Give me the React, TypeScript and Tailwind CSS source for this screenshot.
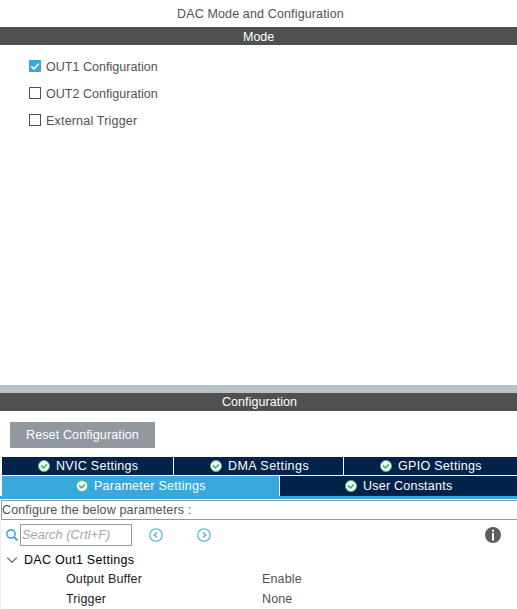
import React from "react";

function Check() {
  return (
    <svg className="h-3 w-3 shrink-0" viewBox="0 0 12 12">
      <circle cx="6" cy="6" r="5.5" fill="#fff" stroke="#55b878" strokeWidth="1" />
      <path d="M3 5.4 5.5 7.9 9 4.4" fill="none" stroke="#45b26c" strokeWidth="1.5" />
    </svg>
  );
}

function Option({ label, tracking, checked = false }: { label: string; tracking: string; checked?: boolean }) {
  return (
    <div className="flex h-[27px] items-center gap-[5px]">
      {checked ? (
        <svg className="h-3 w-3 bg-[#39a9dc]" viewBox="0 0 12 12">
          <path d="M2.2 6.2 4.8 8.8 9.9 3.7" fill="none" stroke="#fff" strokeWidth="1.6" />
        </svg>
      ) : (
        <span className="h-3 w-3 border border-[#4f5150] bg-white" />
      )}
      <span className={`pt-[2px] ${tracking}`}>{label}</span>
    </div>
  );
}

function Tab({ label, className }: { label: string; className: string }) {
  return (
    <div className={`flex items-center gap-1.5 text-white ${className}`}>
      <Check />
      <span>{label}</span>
    </div>
  );
}

function Arrow({ right = false }: { right?: boolean }) {
  return (
    <svg className="h-3.5 w-3.5" viewBox="0 0 14 14" fill="none" stroke="#39a9dc">
      <circle cx="7" cy="7" r="6.2" strokeWidth="1.1" />
      <path d={right ? "M6 4.3 8.7 7 6 9.7" : "M8 4.3 5.3 7 8 9.7"} strokeWidth="1.2" />
    </svg>
  );
}

export default function App() {
  return (
    <div className="h-[609px] w-[517px] overflow-hidden whitespace-nowrap bg-white font-['Liberation_Sans',Arial,sans-serif] text-[12.5px] leading-[18px] tracking-[0.14px] text-[#505251]">
      <div className="h-[27px] pl-[177px] pt-[5px]">DAC Mode and Configuration</div>
      <div className="h-[18px] bg-[#4f5150] pl-[243px] pt-px leading-[18px] tracking-normal text-white">Mode</div>
      <div className="h-[340px] pl-[29px] pt-[7px]">
        <Option label="OUT1 Configuration" tracking="tracking-[0.03px]" checked />
        <Option label="OUT2 Configuration" tracking="tracking-[0.03px]" />
        <Option label="External Trigger" tracking="tracking-[0.19px]" />
      </div>
      <div className="h-2 bg-[#b7c3c9]" />
      <div className="h-[18px] bg-[#4f5150] pl-[222px] tracking-[0.06px] text-white">Configuration</div>
      <div className="h-[46px] pl-[10px] pt-[11px]">
        <button className="flex h-[26px] w-[145px] items-center bg-[#91989e] pl-4 tracking-[0.13px] text-white">Reset Configuration</button>
      </div>
      <div className="flex h-[18px] gap-px pl-[2px]">
        <Tab label="NVIC Settings" className="w-[171px] bg-[#03234b] pl-9 tracking-[0.3px]" />
        <Tab label="DMA Settings" className="w-[169px] bg-[#03234b] pl-9 tracking-[0.45px]" />
        <Tab label="GPIO Settings" className="flex-1 bg-[#03234b] pl-9 tracking-[0.3px]" />
      </div>
      <div className="mt-px flex h-5 gap-px pl-[2px]">
        <Tab label="Parameter Settings" className="w-[277px] bg-[#39a9dc] pl-[74px] tracking-[0.26px]" />
        <Tab label="User Constants" className="flex-1 bg-[#03234b] pl-[65px] tracking-[0.23px]" />
      </div>
      <div className="h-[3px] bg-[#39a9dc]" />
      <div className="ml-px mt-px h-5 border border-r-0 border-[#91989e] leading-[19px] tracking-[0.14px]">Configure the below parameters :</div>
      <div className="flex flex-col border-l border-[#eeeeee]">
        <div className="flex h-[30px] items-center">
          <svg className="ml-[5px] h-3 w-3" viewBox="0 0 12 12" fill="none" stroke="#39a9dc" strokeWidth="1.6">
            <circle cx="5" cy="5" r="4.1" />
            <path d="m8 8 3.4 3.4" strokeWidth="2" />
          </svg>
          <div className="ml-[2px] h-[22px] w-[112px] border border-[#91989e] pl-px leading-[21px] italic tracking-[0.17px] text-[#a5a5a5]">Search (Crtl+F)</div>
          <div className="ml-[17px] flex gap-[34px]">
            <Arrow />
            <Arrow right />
          </div>
          <svg className="ml-[274px] h-4 w-4" viewBox="0 0 16 16">
            <circle cx="8" cy="8" r="8" fill="#5e5e5e" />
            <path d="M8 6V13.5M8 2.7V4.7" stroke="#fff" strokeWidth="2" />
          </svg>
        </div>
        <div className="flex h-[19px] items-center text-black">
          <svg className="ml-[5px] h-2 w-3" viewBox="0 0 12 8" fill="none" stroke="#777" strokeWidth="1.3">
            <path d="m1.2 1.5 4.8 4.8 4.8-4.8" />
          </svg>
          <span className="ml-[6px] tracking-[0.27px]">DAC Out1 Settings</span>
        </div>
        <div className="flex h-5 items-center pl-[65px]">
          <span className="w-[196px] text-[#222]">Output Buffer</span>
          <span>Enable</span>
        </div>
        <div className="flex h-5 items-center pl-[65px]">
          <span className="w-[196px] text-[#222]">Trigger</span>
          <span>None</span>
        </div>
        <div className="h-px" />
      </div>
    </div>
  );
}
